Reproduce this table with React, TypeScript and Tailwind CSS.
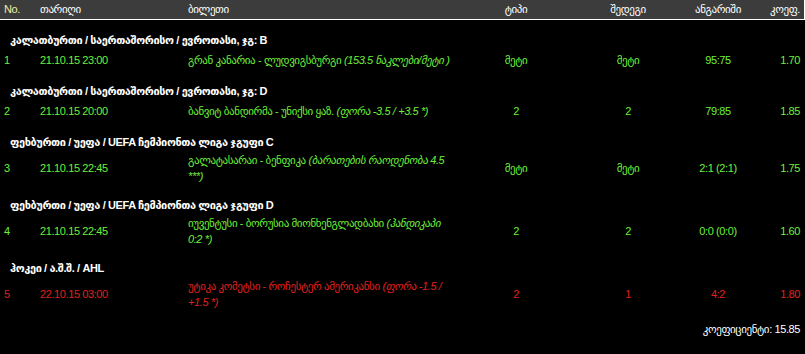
import React from "react"

interface Bet {
  no: string
  date: string
  name: string
  extra: string
  type: string
  result: string
  score: string
  coef: string
  lost?: boolean
}

interface Group {
  title: string
  bet: Bet
}

const groups: Group[] = [
  {
    title: "კალათბურთი / საერთაშორისო / ევროთასი, ჯგ: B",
    bet: {
      no: "1",
      date: "21.10.15 23:00",
      name: "გრან კანარია - ლუდვიგსბურგი",
      extra: "(153.5 ნაკლები/მეტი )",
      type: "მეტი",
      result: "მეტი",
      score: "95:75",
      coef: "1.70",
    },
  },
  {
    title: "კალათბურთი / საერთაშორისო / ევროთასი, ჯგ: D",
    bet: {
      no: "2",
      date: "21.10.15 20:00",
      name: "ბანვიტ ბანდირმა - უნიქსი ყაზ.",
      extra: "(ფორა -3.5 / +3.5 *)",
      type: "2",
      result: "2",
      score: "79:85",
      coef: "1.85",
    },
  },
  {
    title: "ფეხბურთი / უეფა / UEFA ჩემპიონთა ლიგა ჯგუფი C",
    bet: {
      no: "3",
      date: "21.10.15 22:45",
      name: "გალატასარაი - ბენფიკა",
      extra: "(ბარათების რაოდენობა 4.5 ***)",
      type: "მეტი",
      result: "მეტი",
      score: "2:1 (2:1)",
      coef: "1.75",
    },
  },
  {
    title: "ფეხბურთი / უეფა / UEFA ჩემპიონთა ლიგა ჯგუფი D",
    bet: {
      no: "4",
      date: "21.10.15 22:45",
      name: "იუვენტუსი - ბორუსია მიონხენგლადბახი",
      extra: "(ჰანდიკაპი 0:2 *)",
      type: "2",
      result: "2",
      score: "0:0 (0:0)",
      coef: "1.60",
    },
  },
  {
    title: "ჰოკეი / ა.შ.შ. / AHL",
    bet: {
      no: "5",
      date: "22.10.15 03:00",
      name: "უტიკა კომეტსი - როჩესტერ ამერიკანსი",
      extra: "(ფორა -1.5 / +1.5 *)",
      type: "2",
      result: "1",
      score: "4:2",
      coef: "1.80",
      lost: true,
    },
  },
]

const cols = "grid grid-cols-[36px_148px_272px_120px_104px_76px_1fr] items-center"

export default function App() {
  return (
    <div
      className="w-[805px] h-[354px] bg-black text-[11px] tracking-[-0.4px] overflow-hidden"
      style={{ fontFamily: '"Liberation Sans", "DejaVu Sans", sans-serif' }}
    >
      <div className={`${cols} h-[20px] bg-[#3c3c3c] border-b border-r border-white text-white`}>
        <div className="pl-[4px] text-[#f3eda0]">No.</div>
        <div className="pl-[4px]">თარიღი</div>
        <div className="pl-[4px]">ბილეთი</div>
        <div className="text-center">ტიპი</div>
        <div className="text-center">შედეგი</div>
        <div className="text-center">ანგარიში</div>
        <div className="text-right pr-[4px]">კოეფ.</div>
      </div>

      <div className="pt-[10px]">
        {groups.map((g) => (
          <div key={g.bet.no} className="mb-[11px]">
            <div className="h-[20px] flex items-center pl-[10px] font-bold text-white">{g.title}</div>
            <div
              className={`${cols} min-h-[20px] ${g.bet.lost ? "text-[#e0201e]" : "text-[#6cf03a]"}`}
            >
              <div className="pl-[4px]">{g.bet.no}</div>
              <div className="pl-[4px]">{g.bet.date}</div>
              <div className="pl-[4px] leading-[16px]">
                {g.bet.name} <span className="italic">{g.bet.extra}</span>
              </div>
              <div className="text-center">{g.bet.type}</div>
              <div className="text-center">{g.bet.result}</div>
              <div className="text-center">{g.bet.score}</div>
              <div className="text-right pr-[5px]">{g.bet.coef}</div>
            </div>
          </div>
        ))}
      </div>

      <div className="text-right pr-[5px] text-white">კოეფიციენტი: 15.85</div>
    </div>
  )
}
